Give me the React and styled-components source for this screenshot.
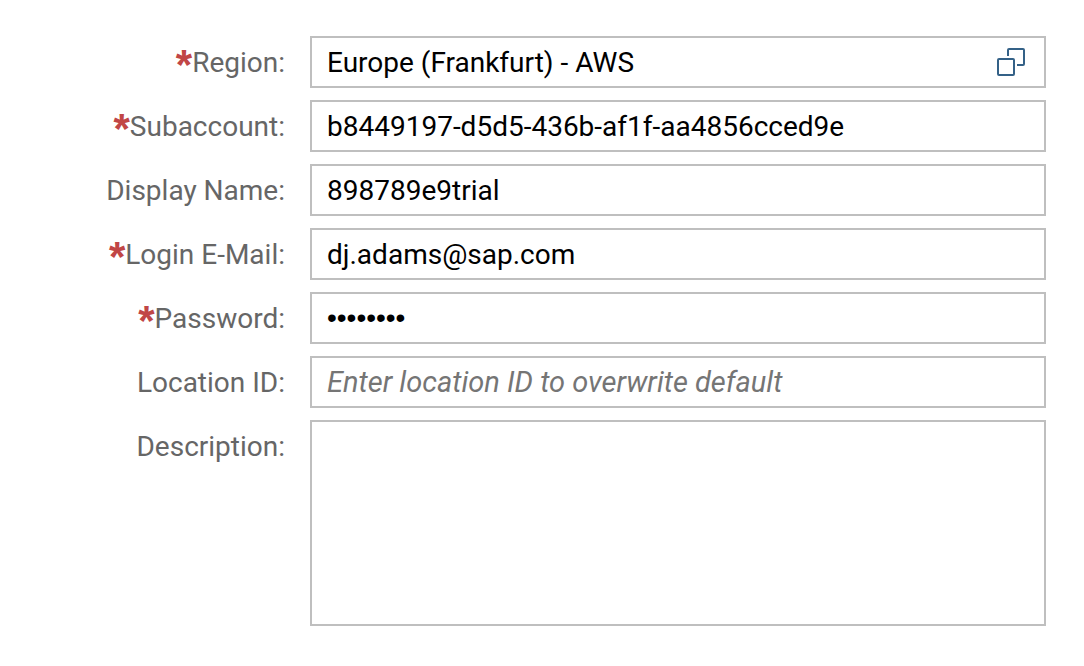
import React, { useId } from "react";
import styled, { createGlobalStyle, css } from "styled-components";

const GlobalStyle = createGlobalStyle`
  *, *::before, *::after { box-sizing: border-box; }
  body { margin: 0; background: #fff; }
`;

const Form = styled.form`
  display: flex;
  flex-direction: column;
  gap: 12px;
  padding: 36px 38px 40px 40px;
  font-family: Roboto, "Liberation Sans", sans-serif;
  font-size: 28px;
  line-height: 32px;
  color: #000;
`;

const Row = styled.div`
  display: grid;
  grid-template-columns: 245px minmax(0, 1fr);
  column-gap: 25px;
  align-items: start;
`;

const Label = styled.label`
  display: flex;
  justify-content: flex-end;
  height: 52px;
  line-height: 54px;
  color: #666;
  white-space: nowrap;
`;

const Required = styled.span`
  color: #c14646;
  font-family: "Liberation Sans", sans-serif;
  font-size: 42px;
  font-weight: 700;
  line-height: 58px;
`;

const control = css`
  display: block;
  width: 100%;
  margin: 0;
  padding: 0 15px;
  border: 2px solid #bfbfbf;
  border-radius: 0;
  outline: none;
  background: #fff;
  color: inherit;
  font: inherit;
`;

const Input = styled.input`
  ${control}
  height: 52px;
  &[type="password"] {
    font-family: "Liberation Sans", sans-serif;
  }
  &::placeholder {
    color: #757575;
    font-size: 29px;
    font-style: italic;
    opacity: 1;
  }
`;

const TextArea = styled.textarea`
  ${control}
  height: 206px;
  padding: 8px 15px;
  resize: none;
`;

const HelpField = styled.div`
  display: flex;
  align-items: center;
  border: 2px solid #bfbfbf;
  height: 52px;
  ${Input} {
    flex: 1;
    min-width: 0;
    height: 48px;
    border: 0;
  }
`;

const HelpButton = styled.button`
  display: flex;
  flex: none;
  align-items: center;
  justify-content: center;
  width: 66px;
  height: 48px;
  padding: 0;
  border: 0;
  background: transparent;
  color: #346187;
  cursor: pointer;
`;

function ValueHelpIcon() {
  return (
    <svg width="30" height="30" viewBox="0 0 30 30" fill="none" stroke="currentColor" strokeWidth="2" aria-hidden="true">
      <rect x="2" y="12" width="16" height="16" rx="1" />
      <path d="M12 9V3a1 1 0 0 1 1-1H27a1 1 0 0 1 1 1V17a1 1 0 0 1-1 1H21" />
    </svg>
  );
}

function Field({ label, required, help, multiline, ...rest }) {
  const id = useId();
  return (
    <Row>
      <Label htmlFor={id}>
        {required && <Required>*</Required>}
        {label}:
      </Label>
      {multiline ? (
        <TextArea id={id} {...rest} />
      ) : help ? (
        <HelpField>
          <Input id={id} {...rest} />
          <HelpButton type="button" aria-label="Select region">
            <ValueHelpIcon />
          </HelpButton>
        </HelpField>
      ) : (
        <Input id={id} {...rest} />
      )}
    </Row>
  );
}

export default function App() {
  return (
    <>
      <GlobalStyle />
      <Form>
        <Field label="Region" required help defaultValue="Europe (Frankfurt) - AWS" />
        <Field label="Subaccount" required defaultValue="b8449197-d5d5-436b-af1f-aa4856cced9e" />
        <Field label="Display Name" defaultValue="898789e9trial" />
        <Field label="Login E-Mail" required type="email" defaultValue="dj.adams@sap.com" />
        <Field label="Password" required type="password" defaultValue="password" />
        <Field label="Location ID" placeholder="Enter location ID to overwrite default" />
        <Field label="Description" multiline />
      </Form>
    </>
  );
}
